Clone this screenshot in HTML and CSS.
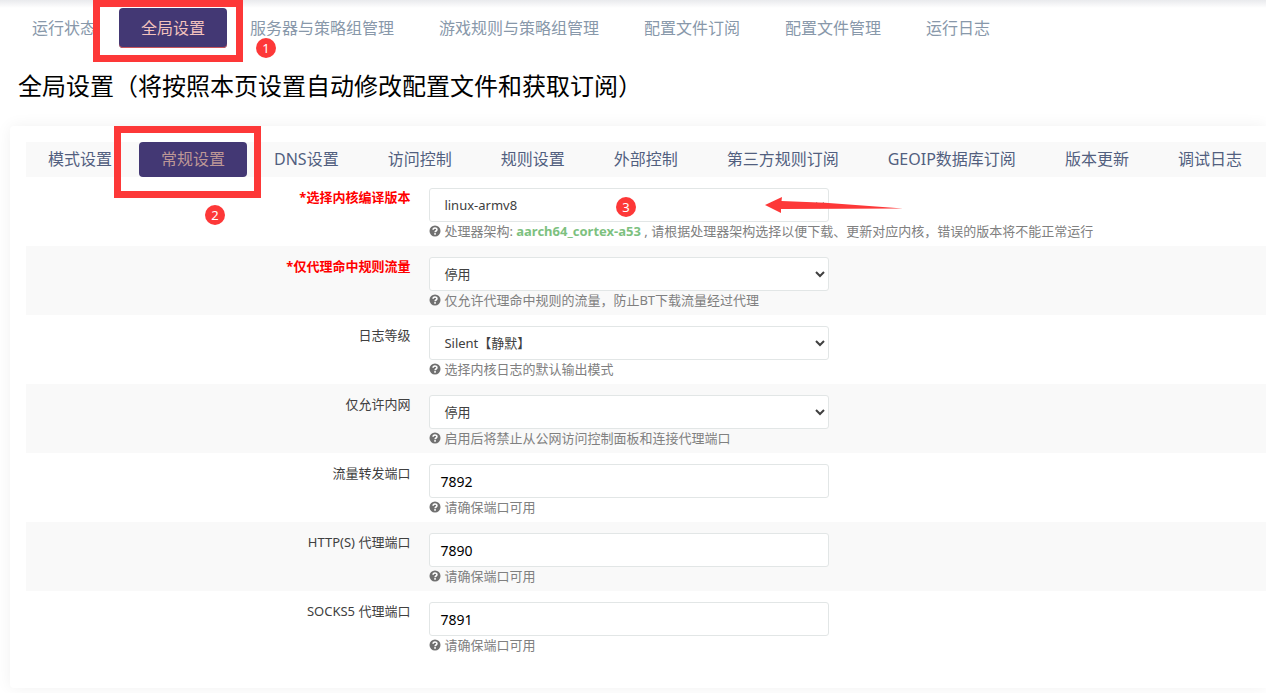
FILE: index.html
```html
<!DOCTYPE html>
<html lang="zh-CN">
<head>
<meta charset="utf-8">
<title>全局设置</title>
<link rel="stylesheet" href="styles.css">
</head>
<body>
<svg class="defs" aria-hidden="true">
  <symbol id="help" viewBox="0 0 12 12">
    <circle cx="6" cy="6" r="5.5" fill="#707070"/>
    <path d="M4.1 4.8C4.1 2.5 7.9 2.5 7.9 4.7C7.9 6 6.1 6 6.1 7.3" fill="none" stroke="#fff" stroke-width="1.6"/>
    <rect x="5.2" y="8.1" width="1.7" height="1.6" fill="#fff"/>
  </symbol>
</svg>
<nav class="nav">
  <a href="#">运行状态</a>
  <a href="#" class="active">全局设置</a>
  <a href="#">服务器与策略组管理</a>
  <a href="#">游戏规则与策略组管理</a>
  <a href="#">配置文件订阅</a>
  <a href="#">配置文件管理</a>
  <a href="#">运行日志</a>
</nav>
<h1 class="title">全局设置（将按照本页设置自动修改配置文件和获取订阅）</h1>
<main class="card">
  <div class="tabs">
    <a href="#">模式设置</a>
    <a href="#" class="active">常规设置</a>
    <a href="#">DNS设置</a>
    <a href="#">访问控制</a>
    <a href="#">规则设置</a>
    <a href="#">外部控制</a>
    <a href="#">第三方规则订阅</a>
    <a href="#">GEOIP数据库订阅</a>
    <a href="#">版本更新</a>
    <a href="#">调试日志</a>
  </div>
  <form class="form">
    <div class="row">
      <label class="required" for="core">*选择内核编译版本</label>
      <div class="field">
        <select id="core"><option>linux-armv8</option></select>
        <p class="hint"><svg class="icon"><use href="#help"/></svg><span>处理器架构: <b>aarch64_cortex-a53</b> , 请根据处理器架构选择以便下载、更新对应内核，错误的版本将不能正常运行</span></p>
      </div>
    </div>
    <div class="row">
      <label class="required" for="rule">*仅代理命中规则流量</label>
      <div class="field">
        <select id="rule"><option>停用</option></select>
        <p class="hint"><svg class="icon"><use href="#help"/></svg><span>仅允许代理命中规则的流量，防止BT下载流量经过代理</span></p>
      </div>
    </div>
    <div class="row">
      <label for="log">日志等级</label>
      <div class="field">
        <select id="log"><option>Silent【静默】</option></select>
        <p class="hint"><svg class="icon"><use href="#help"/></svg><span>选择内核日志的默认输出模式</span></p>
      </div>
    </div>
    <div class="row">
      <label for="lan">仅允许内网</label>
      <div class="field">
        <select id="lan"><option>停用</option></select>
        <p class="hint"><svg class="icon"><use href="#help"/></svg><span>启用后将禁止从公网访问控制面板和连接代理端口</span></p>
      </div>
    </div>
    <div class="row">
      <label for="redir">流量转发端口</label>
      <div class="field">
        <input id="redir" type="text" value="7892">
        <p class="hint"><svg class="icon"><use href="#help"/></svg><span>请确保端口可用</span></p>
      </div>
    </div>
    <div class="row">
      <label for="http">HTTP(S) 代理端口</label>
      <div class="field">
        <input id="http" type="text" value="7890">
        <p class="hint"><svg class="icon"><use href="#help"/></svg><span>请确保端口可用</span></p>
      </div>
    </div>
    <div class="row">
      <label for="socks">SOCKS5 代理端口</label>
      <div class="field">
        <input id="socks" type="text" value="7891">
        <p class="hint"><svg class="icon"><use href="#help"/></svg><span>请确保端口可用</span></p>
      </div>
    </div>
  </form>
</main>
<div class="mark mark-nav"></div>
<div class="mark mark-tab"></div>
<span class="step step-1">1</span>
<span class="step step-2">2</span>
<span class="step step-3">3</span>
<svg class="arrow" viewBox="0 0 138 18" aria-hidden="true"><path d="M0 9L17 1L16.5 5L60 6.8L138 12.5L16 13L16 17Z" fill="#fd3838"/></svg>
</body>
</html>
```
FILE: styles.css
```css
* { box-sizing: border-box; }
body {
  margin: 0;
  position: relative;
  min-height: 100vh;
  overflow: hidden;
  background: #fff;
  color: #404040;
  font-family: "Noto Sans", "Noto Sans CJK SC", sans-serif;
  font-size: 13px;
  font-weight: 400;
}
a { text-decoration: none; white-space: nowrap; }
.defs { position: absolute; width: 0; height: 0; }
.nav {
  display: flex;
  gap: 1px;
  padding: 8px 10px 0;
  background: linear-gradient(#e9eaed, #fff 8px);
}
.nav a {
  padding: 0 22px;
  font-size: 16px;
  line-height: 40px;
  color: #8898aa;
}
.nav .active {
  color: #f3c3bd;
  background: #433874;
  border-radius: 4px;
  box-shadow: inset 0 -1px #c9555c;
}
.title {
  margin: 0;
  padding: 19px 18px 21px;
  font-size: 24px;
  font-weight: 400;
  line-height: 38px;
  color: #000;
}
.card {
  margin-left: 10px;
  padding: 16px 0 28px 16px;
  border-radius: 4px 0 0 4px;
  background: #fff;
  box-shadow: 0 0 16px rgba(0, 0, 0, .06);
}
.tabs {
  display: flex;
  gap: 5px;
  background: #f9f9f9;
}
.tabs a {
  padding: 0 22px;
  font-size: 16px;
  line-height: 35px;
  color: #525f7f;
}
.tabs .active {
  color: #bd9796;
  background: #433874;
  border-radius: 4px;
}
.row {
  display: grid;
  grid-template-columns: 31% 1fr;
  column-gap: 19px;
  padding: 11px 0 6px;
}
.row:nth-child(even) { background: #f9f9f9; }
label {
  line-height: 18px;
  text-align: right;
}
.required { color: #f00; font-weight: 700; }
input, select {
  display: block;
  width: 400px;
  height: 34px;
  padding: 0 10px;
  border: 1px solid #e2e6e6;
  border-radius: 3px;
  background-color: #fff;
  color: #404040;
  font: inherit;
  font-size: 14px;
}
select { font-size: 13px; }
input { color: #000; }
.hint {
  display: flex;
  align-items: center;
  gap: 3px;
  margin: 0;
  line-height: 18px;
  color: #808080;
  white-space: nowrap;
}
.hint b { color: #7dc17f; font-weight: 700; }
.icon { width: 12px; height: 12px; }
.mark { position: absolute; border: 7px solid #fd3838; }
.mark-nav { left: 93px; top: 0; width: 150px; height: 62px; }
.mark-tab { left: 114px; top: 126px; width: 147px; height: 72px; }
.step {
  position: absolute;
  width: 20px;
  height: 20px;
  border-radius: 50%;
  background: #fd3838;
  color: #fff;
  font-size: 13px;
  font-weight: 400;
  line-height: 20px;
  text-align: center;
}
.step-1 { left: 256px; top: 38px; }
.step-2 { left: 205px; top: 205px; }
.step-3 { left: 616px; top: 197px; }
.arrow { position: absolute; left: 765px; top: 196px; width: 138px; height: 18px; }
```
